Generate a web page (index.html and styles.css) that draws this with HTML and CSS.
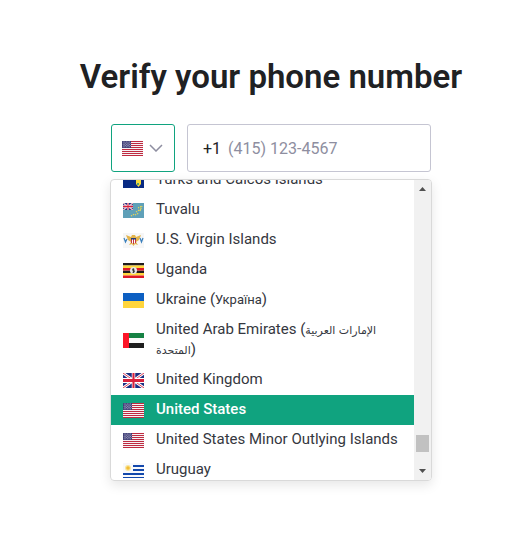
FILE: index.html
```html
<!DOCTYPE html>
<html lang="en">
<head>
<meta charset="utf-8">
<meta name="viewport" content="width=device-width, initial-scale=1">
<title>Verify your phone number</title>
<link rel="stylesheet" href="styles.css">
</head>
<body>
<svg class="defs" aria-hidden="true">
  <symbol id="us" viewBox="0 0 21 15">
    <path fill="#f5f2f4" d="M0 0h21v15H0z"/>
    <path fill="#bf2a40" d="M0 0h21v1H0zM0 2h21v1H0zM0 4h21v1H0zM0 6h21v1H0zM0 8h21v1H0zM0 10h21v1H0zM0 12h21v1H0zM0 14h21v1H0z"/>
    <path fill="#3c3b73" d="M0 0h9v7H0z"/>
    <path stroke="#c4c4dc" stroke-width=".8" stroke-dasharray=".8 .8" d="M.8 1h8M1.6 2.2h7M.8 3.4h8M1.6 4.6h7M.8 5.8h8"/>
  </symbol>
  <symbol id="uj" viewBox="0 0 60 30" preserveAspectRatio="none">
    <path fill="#1b2f83" d="M0 0h60v30H0z"/>
    <path stroke="#fff" stroke-width="6" d="M0 0l60 30M60 0L0 30"/>
    <path stroke="#d8203c" stroke-width="2" d="M0 0l60 30M60 0L0 30"/>
    <path stroke="#fff" stroke-width="10" d="M30 0v30M0 15h60"/>
    <path stroke="#d8203c" stroke-width="6" d="M30 0v30M0 15h60"/>
  </symbol>
</svg>
<main class="page">
  <h1 class="title">Verify your phone number</h1>
  <form class="phone">
    <div class="fields">
      <button class="country" type="button" aria-label="Country: United States" aria-haspopup="listbox" aria-expanded="true">
        <svg class="flag"><use href="#us"/></svg>
        <svg class="chevron" viewBox="0 0 14 8"><path d="M1 1l6 6 6-6"/></svg>
      </button>
      <div class="number">
        <label class="code" for="tel">+1</label>
        <input class="tel" id="tel" type="tel" placeholder="(415) 123-4567">
      </div>
    </div>
    <div class="menu">
      <ul class="list" role="listbox" aria-label="Country">
        <li class="item" role="option"><svg class="flag" viewBox="0 0 21 15"><path fill="#082a83" d="M0 0h21v15H0z"/><svg width="10" height="7"><use href="#uj"/></svg><path fill="#f8dc3c" d="M13 7h5v4l-2.500 3L13 11z"/><path fill="#58a070" d="M14 10h2v2h-2z"/></svg><span class="name">Turks and Caicos Islands</span></li>
        <li class="item" role="option"><svg class="flag" viewBox="0 0 21 15"><path fill="#5fa0b8" d="M0 0h21v15H0z"/><svg width="10" height="7"><use href="#uj"/></svg><path stroke="#e2d45a" stroke-width="1.300" stroke-dasharray="1.300 1" d="M8 13l3.500-2M12 12l4-2M13 9l5-3M17 8l2-5M15 5l4-2"/></svg><span class="name">Tuvalu</span></li>
        <li class="item" role="option"><svg class="flag" viewBox="0 0 21 15"><path fill="#f6f6f6" d="M0 0h21v15H0z"/><path fill="#e3b44c" d="M3 2l5 2 1-2h3l1 2 5-2-2 5-3 2 2 3-3-1-1.500 2L9 11l-3 1 2-3-3-2z"/><path fill="#fff" d="M8 5h5v4l-2.500 2L8 9z"/><path stroke="#c33545" d="M8.500 6v4M10.500 6v5M12.500 6v4"/><path fill="#263d78" d="M8 5h5v1.500H8z"/><path fill="none" stroke="#3b80bd" stroke-width="1.200" d="M1 5l1.500 4L4 6M17 5l1.500 4L20 5"/></svg><span class="name">U.S. Virgin Islands</span></li>
        <li class="item" role="option"><svg class="flag" viewBox="0 0 21 15"><path fill="#201c1d" d="M0 0h21v2.500H0zM0 7.500h21V10H0z"/><path fill="#ffd83c" d="M0 2.500h21V5H0zM0 10h21v2.500H0z"/><path fill="#df1827" d="M0 5h21v2.500H0zM0 12.500h21V15H0z"/><circle cx="10.500" cy="7.500" r="3.500" fill="#e8e8e8"/><path fill="#39383a" d="M10 5l1.500 1-.5 1 1 1-1 2H9.500L10 8 9 7z"/></svg><span class="name">Uganda</span></li>
        <li class="item" role="option"><svg class="flag" viewBox="0 0 21 15"><path fill="#0d5fc2" d="M0 0h21v8H0z"/><path fill="#ffd53c" d="M0 8h21v7H0z"/></svg><span class="name">Ukraine (<span class="cyrillic">Україна</span>)</span></li>
        <li class="item" role="option"><svg class="flag" viewBox="0 0 21 15"><path fill="#168244" d="M6 0h15v5H6z"/><path fill="#fafafa" d="M6 5h15v5H6z"/><path fill="#1e1e1e" d="M6 10h15v5H6z"/><path fill="#fc1628" d="M0 0h6v15H0z"/></svg><span class="name">United Arab Emirates (<span class="arabic">الإمارات العربية المتحدة</span>)</span></li>
        <li class="item" role="option"><svg class="flag"><use href="#uj"/></svg><span class="name">United Kingdom</span></li>
        <li class="item selected" role="option" aria-selected="true"><svg class="flag"><use href="#us"/></svg><span class="name">United States</span></li>
        <li class="item" role="option"><svg class="flag"><use href="#us"/></svg><span class="name">United States Minor Outlying Islands</span></li>
        <li class="item" role="option"><svg class="flag" viewBox="0 0 21 15"><path fill="#f8f9fc" d="M0 0h21v15H0z"/><path fill="#1348ac" d="M10 2h11v2H10zM10 6h11v2H10zM0 10h21v2H0zM0 14h21v1H0z"/><circle cx="5" cy="5" r="3" fill="#f8e6a0"/><circle cx="5" cy="5" r="1.800" fill="#f3bd35"/></svg><span class="name">Uruguay</span></li>
      </ul>
      <div class="scrollbar" aria-hidden="true">
        <svg class="arrow" viewBox="0 0 17 17"><path d="M5 11h7L8.500 7z"/></svg>
        <span class="track"></span>
        <span class="thumb"></span>
        <svg class="arrow" viewBox="0 0 17 17"><path d="M5 6h7l-3.500 4z"/></svg>
      </div>
    </div>
  </form>
</main>
</body>
</html>
```
FILE: styles.css
```css
* {
  box-sizing: border-box;
}

body {
  margin: 0;
  background: #fff;
  color: #202123;
  font-family: Roboto, "Liberation Sans", sans-serif;
}

.defs {
  position: absolute;
  width: 0;
  height: 0;
}

.page {
  padding: 57px 0 24px 11px;
}

.title {
  margin: 0 0 27px;
  font-size: 33px;
  line-height: 40px;
  font-weight: 600;
  text-align: center;
}

.phone {
  max-width: 322px;
  margin: 0 auto;
}

.fields {
  display: flex;
  gap: 12px;
  height: 48px;
  margin: 0 1px 7px;
}

.country {
  display: flex;
  align-items: center;
  gap: 6px;
  width: 64px;
  padding: 0 10px;
  border: 1px solid #10a37f;
  border-radius: 3px;
  background: #fff;
}

.flag {
  display: block;
  flex: none;
  width: 21px;
  height: 15px;
}

.chevron {
  width: 14px;
  height: 8px;
  fill: none;
  stroke: #8e8ea0;
  stroke-width: 1.5;
}

.number {
  display: flex;
  flex: 1;
  align-items: center;
  gap: 7px;
  min-width: 0;
  padding: 0 15px;
  border: 1px solid #c5c5d2;
  border-radius: 3px;
  font-size: 16px;
}

.tel {
  flex: 1;
  min-width: 0;
  padding: 0;
  border: 0;
  outline: 0;
  background: none;
  color: inherit;
  font: inherit;
}

.tel::placeholder {
  color: #8e8ea0;
}

.menu {
  display: flex;
  height: 302px;
  overflow: hidden;
  border: 1px solid #d9d9d9;
  border-radius: 4px;
  box-shadow: 0 4px 12px rgba(0, 0, 0, 0.1);
}

.list {
  flex: 1;
  margin: -15px 0 0;
  padding: 0;
  list-style: none;
}

.item {
  display: flex;
  align-items: center;
  gap: 12px;
  padding: 4px 12px 6px;
  color: #353740;
  font-size: 15px;
  line-height: 20px;
}

.item .flag {
  margin-top: 3px;
}

.selected {
  background: #10a37f;
  color: #fff;
  font-weight: 500;
}

.cyrillic {
  font-size: 13px;
  line-height: 1;
}

.arabic {
  font-family: "DejaVu Sans", sans-serif;
  font-size: 11px;
  line-height: 1;
}

.scrollbar {
  display: flex;
  flex-direction: column;
  width: 17px;
  background: #f1f1f1;
}

.arrow {
  width: 17px;
  height: 17px;
  fill: #505050;
}

.track {
  flex: 1;
}

.thumb {
  height: 17px;
  margin: 0 2px 11px;
  background: #c1c1c1;
}
```
